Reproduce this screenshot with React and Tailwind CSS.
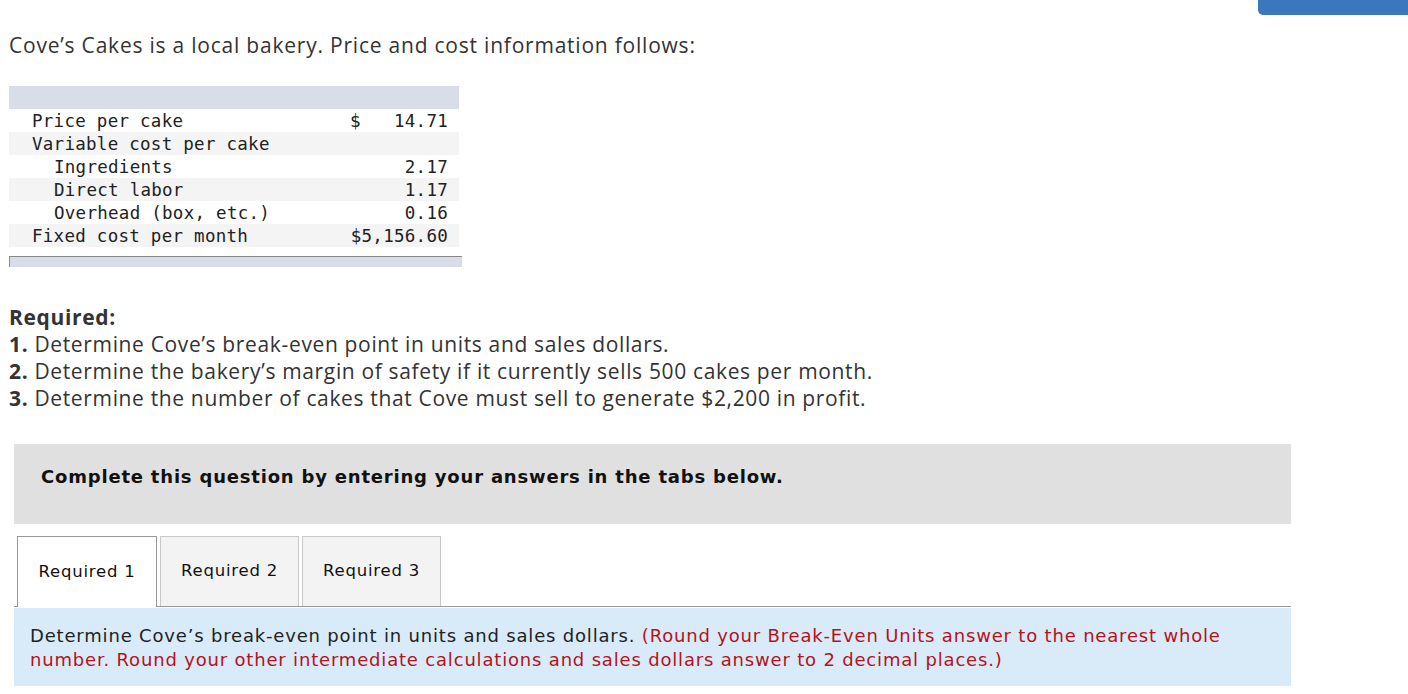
import React from "react";

const rows = [
  { label: "Price per cake", indent: false, value: "14.71", dollar: true },
  { label: "Variable cost per cake", indent: false, value: "" },
  { label: "Ingredients", indent: true, value: "2.17" },
  { label: "Direct labor", indent: true, value: "1.17" },
  { label: "Overhead (box, etc.)", indent: true, value: "0.16" },
  { label: "Fixed cost per month", indent: false, value: "$5,156.60" },
];

const tabs = ["Required 1", "Required 2", "Required 3"];

const App = () => {
  return (
    <div className="min-h-[694px] bg-white text-[#333]">
      {/* Top right button (clipped by the viewport) */}
      <div className="flex justify-end">
        <div className="mr-[-10px] h-[15px] w-[160px] rounded-bl-[5px] bg-[#3a77bc]" />
      </div>

      <div className="pl-[9px]">
        <p className="mt-[15px] font-['Open_Sans',sans-serif] text-[21px] leading-[30px] tracking-[0.78px] text-[#333]">
          Cove’s Cakes is a local bakery. Price and cost information follows:
        </p>

        {/* Data table */}
        <div className="mt-[26px] w-[450px]">
          <div className="h-[23px] bg-[#d9dde8]" />
          <div className="font-['DejaVu_Sans_Mono',monospace] text-[17.5px] tracking-[0.27px] text-[#222]">
            {rows.map((r, i) => (
              <div
                key={r.label}
                className={`flex h-[23px] items-center pt-[1px] ${i % 2 === 1 ? "bg-[#f4f4f4]" : "bg-white"}`}
              >
                <span className={r.indent ? "pl-[45px]" : "pl-[23px]"}>{r.label}</span>
                <span className="ml-auto flex w-[109px] justify-between pr-[11px]">
                  <span>{r.dollar ? "$" : ""}</span>
                  <span>{r.value}</span>
                </span>
              </div>
            ))}
          </div>
          <div className="mt-[9px] h-[11px] w-[453px] border-l border-t border-[#888] bg-[#d9dde8]" />
        </div>

        {/* Required section */}
        <div className="mt-[37px] font-['Open_Sans',sans-serif] text-[21px] leading-[27px] tracking-[0.65px] text-[#333]">
          <p className="font-bold">Required:</p>
          <p>
            <span className="font-bold">1.</span> Determine Cove’s break-even point in units and sales dollars.
          </p>
          <p>
            <span className="font-bold">2.</span> Determine the bakery’s margin of safety if it currently sells 500 cakes per month.
          </p>
          <p>
            <span className="font-bold">3.</span> Determine the number of cakes that Cove must sell to generate $2,200 in profit.
          </p>
        </div>
      </div>

      <div className="ml-[14px] mt-[32px] w-[1277px] font-['DejaVu_Sans',Verdana,sans-serif]">
        <div className="h-[80px] bg-[#e0e0e0] pl-[27px] pt-[19px]">
          <p className="text-[18px] font-bold tracking-[0.8px] text-[#111]">
            Complete this question by entering your answers in the tabs below.
          </p>
        </div>

        {/* Tabs */}
        <div className="mt-[12px] flex gap-[3px] border-b border-[#999] pl-[3px]">
          {tabs.map((t, i) => (
            <div
              key={t}
              className={
                i === 0
                  ? "-mb-px flex h-[71px] w-[140px] items-center justify-center border border-b-0 border-[#999] bg-white text-[16.5px] tracking-[0.8px] text-[#111]"
                  : "flex h-[70px] w-[139px] items-center justify-center border border-b-0 border-[#c8c8c8] bg-[#f3f3f3] text-[16.5px] tracking-[0.8px] text-[#111]"
              }
            >
              {t}
            </div>
          ))}
        </div>

        <div className="mt-[1px] h-[78px] bg-[#d9ebf9] px-[16px] pt-[16px] text-[18px] leading-[24px] tracking-[0.82px] text-[#222]">
          Determine Cove’s break-even point in units and sales dollars.{" "}
          <span className="text-[#b5121b]">
            (Round your Break-Even Units answer to the nearest whole
            <br />
            number. Round your other intermediate calculations and sales dollars answer to 2 decimal places.)
          </span>
        </div>
      </div>
    </div>
  );
};

export default App;
